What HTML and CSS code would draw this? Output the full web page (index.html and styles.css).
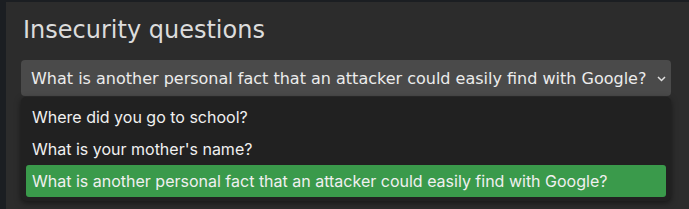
FILE: index.html
```html
<!DOCTYPE html>
<html>
<head>
    <title>Insecurity questions</title>
    <link rel="stylesheet" href="styles.css">
</head>
<body>
    <div class="panel">
        <h2 class="title">Insecurity questions</h2>
        <div class="select">
            <span class="select-value">What is another personal fact that an attacker could easily find with Google?</span>
            <svg class="chevron" width="9" height="6" viewBox="0 0 9 6">
                <path d="M1 1 L4.5 4.5 L8 1" fill="none" stroke="#e0e0e0" stroke-width="1.5"/>
            </svg>
        </div>
        <ul class="options">
            <li class="option">Where did you go to school?</li>
            <li class="option">What is your mother's name?</li>
            <li class="option selected">What is another personal fact that an attacker could easily find with Google?</li>
        </ul>
    </div>
</body>
</html>
```

FILE: styles.css
```css
html, body {
    margin: 0;
    padding: 0;
    height: 100%;
}

body {
    background-color: #1b1e22;
    font-family: "DejaVu Sans", sans-serif;
    padding: 2px 0 0 6px;
    box-sizing: border-box;
}

.panel {
    background-color: #2c2c2c;
    height: 100%;
    padding: 14px 18px 0 15px;
    box-sizing: border-box;
}

.title {
    color: #dcdcdc;
    font-weight: normal;
    font-size: 24px;
    line-height: 28px;
    margin: 0 0 16px 2px;
}

.select {
    display: flex;
    align-items: center;
    background-color: #4a4a4a;
    border-radius: 4px;
    height: 36px;
    padding: 0 5px 0 10px;
    color: #ececec;
    font-size: 16px;
}

.chevron {
    margin-left: auto;
    margin-top: 2px;
}

.options {
    list-style: none;
    margin: 1px 0 0 0;
    padding: 4px 5px;
    background-color: #212121;
    border-radius: 5px;
    box-shadow: 0 2px 6px rgba(0,0,0,0.5);
    font-family: "Inter", sans-serif;
    font-size: 16px;
    color: #f0f0f0;
}

.option {
    height: 32px;
    line-height: 32px;
    padding: 0 6px;
    border-radius: 3px;
}

.selected {
    background-color: #3a9a4b;
}
```
